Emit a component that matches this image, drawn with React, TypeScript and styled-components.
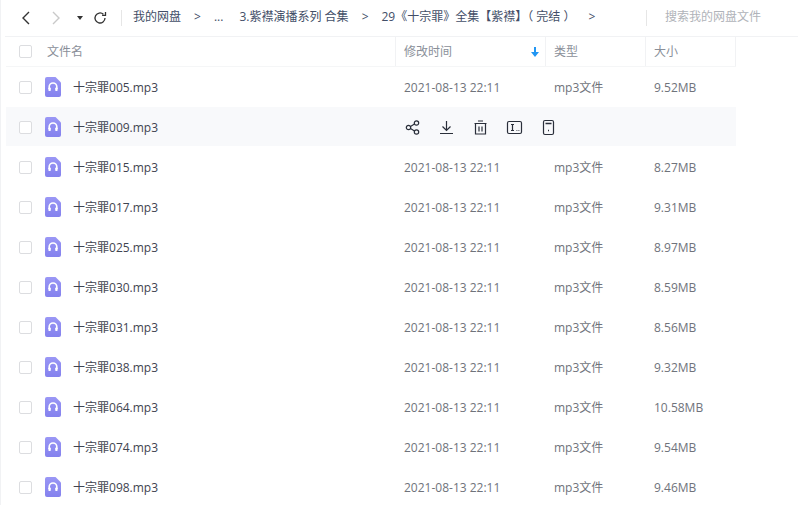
import React from "react";
import styled, { createGlobalStyle } from "styled-components";

const Global = createGlobalStyle`
  html, body { margin: 0; padding: 0; background: #fff; overflow: hidden; }
  * { box-sizing: border-box; }
`;
const Page = styled.div`
  width: 798px; height: 505px; overflow: hidden; background: #fff;
  font-family: "Open Sans", "Noto Sans CJK SC", sans-serif;
  font-size: 12px; line-height: 16px; color: #4a4a4a; padding-left: 5px;
  border-left: 1px solid #f1f2f4;
`;
const Toolbar = styled.div`
  height: 37px; display: flex; align-items: center; border-bottom: 1px solid #f1f2f4; margin-left: -1px;
`;
const NavBox = styled.div`
  width: 116px; flex: none; display: grid; grid-template-columns: 30px 24px 20px 16px; align-items: center; padding-left: 13px;
`;
const Crumbs = styled.div`
  flex: 1; height: 16px; border-left: 1px solid #e6e6e6; display: flex; align-items: center; gap: 13px; padding: 0 0 2px 11px; white-space: nowrap; color: #424e67;
`;
const Search = styled.div`
  width: 152px; flex: none; height: 16px; border-left: 1px solid #e6e6e6; color: #b0b3b9; padding-left: 18px; line-height: 14px;
`;
const Grid = styled.div`
  width: 730px;
`;
const Columns = `display: grid; grid-template-columns: 390px 150px 100px 90px;`;
const HeadRow = styled.div`
  ${Columns}
  height: 30px; border-bottom: 1px solid #f5f6f7; color: #8a8f99;
`;
const HeadCell = styled.div`
  display: flex; align-items: center; padding: 0 6px 0 8px; border-right: 1px solid #f1f2f4;
  &:first-child { padding-left: 13px; gap: 15px; }
`;
const Row = styled.div<{ $hover?: boolean }>`
  ${Columns}
  height: 40px; align-items: center; box-shadow: inset 0 -1px 0 #fff;
  background: ${(p) => (p.$hover ? "#f8f9fb" : "#fff")};
`;
const NameCell = styled.div`
  display: grid; grid-template-columns: 26px 28px auto; align-items: center; padding-left: 13px; color: #3f4450;
`;
const Box = styled.span`
  width: 13px; height: 13px; border: 1px solid #dcdde0; border-radius: 2px; background: #fff; flex: none;
`;
const FileIcon = styled.svg`
  width: 16px; height: 20px; flex: none;
`;
const NameText = styled.span`
  padding-top: 1px;
`;
const Cell = styled.div`
  padding: 1px 0 0 8px; color: #6f737b; white-space: nowrap;
`;
const Actions = styled.div`
  grid-column: 2 / 5; display: flex; align-items: center; gap: 17px; padding-left: 8px;
`;
const Sort = styled.svg`
  margin-left: auto; width: 8px; height: 10px;
`;
const NavIcon = styled.svg`
  width: 16px; height: 16px; fill: none;
`;
const ActionIcon = styled.svg`
  width: 17px; height: 17px; fill: none; stroke: #2a2f3a; stroke-width: 1.2; flex: none;
`;

const rows: [string, string][] = [
  ["005", "9.52MB"], ["009", ""], ["015", "8.27MB"], ["017", "9.31MB"], ["025", "8.97MB"], ["030", "8.59MB"],
  ["031", "8.56MB"], ["038", "9.32MB"], ["064", "10.58MB"], ["074", "9.54MB"], ["098", "9.46MB"],
];

const Audio = () => (
  <FileIcon viewBox="0 0 16 20">
    <defs>
      <linearGradient id="audio-fill" x1="0" y1="0" x2="0" y2="1">
        <stop offset="0" stopColor="#9a97f5" />
        <stop offset="1" stopColor="#8481ee" />
      </linearGradient>
    </defs>
    <path d="M2 0h8.5L16 5.5V18a2 2 0 0 1-2 2H2a2 2 0 0 1-2-2V2a2 2 0 0 1 2-2z" fill="url(#audio-fill)" />
    <path d="M4.2 12V9.8a3.8 3.8 0 0 1 7.6 0V12" fill="none" stroke="#fff" strokeWidth="1.6" />
    <rect x="3.4" y="10.4" width="2.4" height="3.6" rx=".8" fill="#fff" />
    <rect x="10.2" y="10.4" width="2.4" height="3.6" rx=".8" fill="#fff" />
  </FileIcon>
);

export default function App() {
  return (
    <Page>
      <Global />
      <Toolbar>
        <NavBox>
          <NavIcon viewBox="0 0 16 16"><path d="M11 2 L5 8 L11 14" stroke="#333" strokeWidth="1.4" /></NavIcon>
          <NavIcon viewBox="0 0 16 16"><path d="M5 2 L11 8 L5 14" stroke="#c9c9c9" strokeWidth="1.4" /></NavIcon>
          <NavIcon viewBox="0 0 16 16"><path d="M5 6h6l-3 4z" fill="#333" /></NavIcon>
          <NavIcon viewBox="0 0 16 16"><path d="M13 8a5 5 0 1 1-1.6-3.7M13.5 2v3.4h-3.4" stroke="#333" strokeWidth="1.3" /></NavIcon>
        </NavBox>
        <Crumbs>
          <span>我的网盘</span>
          <span>&gt;</span>
          <span>...{"\u00a0"}</span>
          <span>3.紫襟演播系列 合集</span>
          <span>&gt;</span>
          <span>29《十宗罪》全集【紫襟】（ 完结 ）</span>
          <span>&gt;</span>
        </Crumbs>
        <Search>搜索我的网盘文件</Search>
      </Toolbar>
      <Grid>
        <HeadRow>
          <HeadCell><Box />文件名</HeadCell>
          <HeadCell>修改时间<Sort viewBox="0 0 8 10"><path d="M3 0h2v5h3l-4 5-4-5h3z" fill="#2196f3" /></Sort></HeadCell>
          <HeadCell>类型</HeadCell>
          <HeadCell>大小</HeadCell>
        </HeadRow>
        {rows.map(([n, size], i) => (
          <Row key={n} $hover={i === 1}>
            <NameCell><Box /><Audio /><NameText>十宗罪{n}.mp3</NameText></NameCell>
            {i === 1 ? (
              <Actions>
                <ActionIcon viewBox="0 0 17 17"><circle cx="4.5" cy="8.5" r="2.2" /><circle cx="12.5" cy="4" r="2.2" /><circle cx="12.5" cy="13" r="2.2" /><path d="M6.5 7.4l4-2.3M6.5 9.6l4 2.3" /></ActionIcon>
                <ActionIcon viewBox="0 0 17 17"><path d="M8.5 2v9M4.5 7.5l4 4 4-4M2 14.5h13" /></ActionIcon>
                <ActionIcon viewBox="0 0 17 17"><path d="M2.5 4.5h12M6 2h5M3.5 4.5V15h10V4.5M7 7.5v5M10 7.5v5" /></ActionIcon>
                <ActionIcon viewBox="0 0 17 17"><rect x="1.5" y="2.5" width="14" height="12" rx="1.5" /><path d="M5 5.5h3M6.5 5.5v6M5 11.5h3M10.5 11.5h.8M12.5 11.5h.8" /></ActionIcon>
                <ActionIcon viewBox="0 0 17 17"><rect x="3.5" y="1.5" width="10" height="14" rx="1.5" /><path d="M5.5 4.5h6M8 11.5h1" strokeWidth="1.6" /></ActionIcon>
              </Actions>
            ) : (
              <>
                <Cell>2021-08-13 22:11</Cell>
                <Cell>mp3文件</Cell>
                <Cell>{size}</Cell>
              </>
            )}
          </Row>
        ))}
      </Grid>
    </Page>
  );
}
